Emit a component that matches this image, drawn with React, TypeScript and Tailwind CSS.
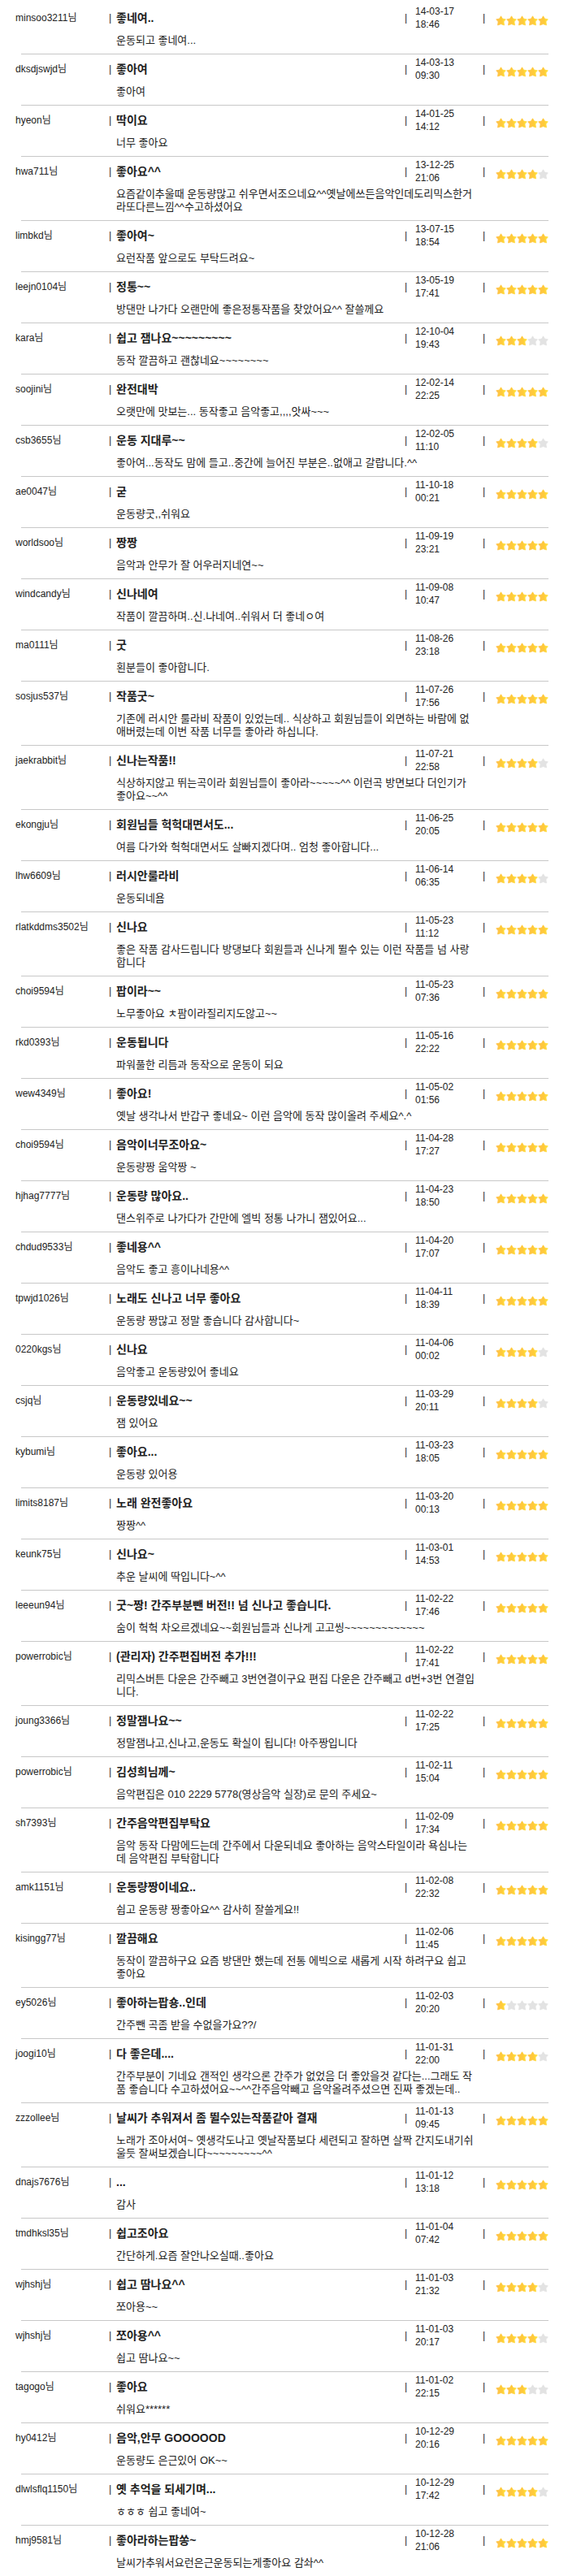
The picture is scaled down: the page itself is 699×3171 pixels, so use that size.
type Review = {
  user: string
  title: string
  date: string
  time: string
  rating: number
  body: string
}

const reviews: Review[] = [
  { user: "minsoo3211", title: "좋네여..", date: "14-03-17", time: "18:46", rating: 5, body: "운동되고 좋네여..." },
  { user: "dksdjswjd", title: "좋아여", date: "14-03-13", time: "09:30", rating: 5, body: "좋아여" },
  { user: "hyeon", title: "딱이요", date: "14-01-25", time: "14:12", rating: 5, body: "너무 좋아요" },
  { user: "hwa711", title: "좋아요^^", date: "13-12-25", time: "21:06", rating: 4, body: "요즘같이추울때 운동량많고 쉬우면서조으네요^^옛날에쓰든음악인데도리믹스한거\n라또다른느낌^^수고하셨어요" },
  { user: "limbkd", title: "좋아여~", date: "13-07-15", time: "18:54", rating: 5, body: "요런작품 앞으로도 부탁드려요~" },
  { user: "leejn0104", title: "정통~~", date: "13-05-19", time: "17:41", rating: 5, body: "방댄만 나가다 오랜만에 좋은정통작품을 찾았어요^^ 잘쓸께요" },
  { user: "kara", title: "쉽고 잼나요~~~~~~~~~", date: "12-10-04", time: "19:43", rating: 3, body: "동작 깔끔하고 괜찮네요~~~~~~~~" },
  { user: "soojini", title: "완전대박", date: "12-02-14", time: "22:25", rating: 5, body: "오랫만에 맛보는... 동작좋고 음악좋고,,,,앗싸~~~" },
  { user: "csb3655", title: "운동 지대루~~", date: "12-02-05", time: "11:10", rating: 4, body: "좋아여...동작도 맘에 들고..중간에 늘어진 부분은..없애고 갈랍니다.^^" },
  { user: "ae0047", title: "굳", date: "11-10-18", time: "00:21", rating: 5, body: "운동량굿,,쉬워요" },
  { user: "worldsoo", title: "짱짱", date: "11-09-19", time: "23:21", rating: 5, body: "음악과 안무가 잘 어우러지네연~~" },
  { user: "windcandy", title: "신나네여", date: "11-09-08", time: "10:47", rating: 5, body: "작품이 깔끔하며..신.나네여..쉬워서 더 좋네ㅇ여" },
  { user: "ma0111", title: "굿", date: "11-08-26", time: "23:18", rating: 5, body: "횐분들이 좋아합니다." },
  { user: "sosjus537", title: "작품굿~", date: "11-07-26", time: "17:56", rating: 5, body: "기존에 러시안 룰라비 작품이 있었는데.. 식상하고 회원님들이 외면하는 바람에 없\n애버렸는데 이번 작품 너무들 좋아라 하십니다." },
  { user: "jaekrabbit", title: "신나는작품!!", date: "11-07-21", time: "22:58", rating: 4, body: "식상하지않고 뛰는곡이라 회원님들이 좋아라~~~~~^^ 이런곡 방면보다 더인기가\n좋아요~~^^" },
  { user: "ekongju", title: "회원님들 헉헉대면서도...", date: "11-06-25", time: "20:05", rating: 5, body: "여름 다가와 헉헉대면서도 살빠지겠다며.. 엄청 좋아합니다..." },
  { user: "lhw6609", title: "러시안룰라비", date: "11-06-14", time: "06:35", rating: 4, body: "운동되네욤" },
  { user: "rlatkddms3502", title: "신나요", date: "11-05-23", time: "11:12", rating: 5, body: "좋은 작품 감사드립니다 방댕보다 회원들과 신나게 뛸수 있는 이런 작품들 넘 사랑\n합니다" },
  { user: "choi9594", title: "팝이라~~", date: "11-05-23", time: "07:36", rating: 5, body: "노무좋아요 ㅊ팜이라질리지도않고~~" },
  { user: "rkd0393", title: "운동됩니다", date: "11-05-16", time: "22:22", rating: 5, body: "파워풀한 리듬과 동작으로 운동이 되요" },
  { user: "wew4349", title: "좋아요!", date: "11-05-02", time: "01:56", rating: 5, body: "옛날 생각나서 반갑구 좋네요~ 이런 음악에 동작 많이올려 주세요^.^" },
  { user: "choi9594", title: "음악이너무조아요~", date: "11-04-28", time: "17:27", rating: 5, body: "운동량짱 움악짱 ~" },
  { user: "hjhag7777", title: "운동량 많아요..", date: "11-04-23", time: "18:50", rating: 5, body: "댄스위주로 나가다가 간만에 엘빅 정통 나가니 잼있어요..." },
  { user: "chdud9533", title: "좋네용^^", date: "11-04-20", time: "17:07", rating: 5, body: "음악도 좋고 흥이나네용^^" },
  { user: "tpwjd1026", title: "노래도 신나고 너무 좋아요", date: "11-04-11", time: "18:39", rating: 5, body: "운동량 짱많고 정말 좋습니다 감사합니다~" },
  { user: "0220kgs", title: "신나요", date: "11-04-06", time: "00:02", rating: 4, body: "음악좋고 운동량있어 좋네요" },
  { user: "csjq", title: "운동량있네요~~", date: "11-03-29", time: "20:11", rating: 4, body: "잼 있어요" },
  { user: "kybumi", title: "좋아요...", date: "11-03-23", time: "18:05", rating: 5, body: "운동량 있어용" },
  { user: "limits8187", title: "노래 완전좋아요", date: "11-03-20", time: "00:13", rating: 5, body: "짱짱^^" },
  { user: "keunk75", title: "신나요~", date: "11-03-01", time: "14:53", rating: 5, body: "추운 날씨에 딱입니다~^^" },
  { user: "leeeun94", title: "굿~짱! 간주부분뺀 버전!! 넘 신나고 좋습니다.", date: "11-02-22", time: "17:46", rating: 5, body: "숨이 헉헉 차오르겠네요~~회원님들과 신나게 고고씽~~~~~~~~~~~~~" },
  { user: "powerrobic", title: "(관리자) 간주편집버전 추가!!!", date: "11-02-22", time: "17:41", rating: 5, body: "리믹스버튼 다운은 간주빼고 3번연결이구요 편집 다운은 간주빼고 d번+3번 연결입\n니다." },
  { user: "joung3366", title: "정말잼나요~~", date: "11-02-22", time: "17:25", rating: 5, body: "정말잼나고,신나고,운동도 확실이 됩니다! 아주짱입니다" },
  { user: "powerrobic", title: "김성희님께~", date: "11-02-11", time: "15:04", rating: 5, body: "음악편집은 010 2229 5778(영상음악 실장)로 문의 주세요~" },
  { user: "sh7393", title: "간주음악편집부탁요", date: "11-02-09", time: "17:34", rating: 5, body: "음악 동작 다맘에드는데 간주에서 다운되네요 좋아하는 음악스타일이라 욕심나는\n데 음악편집 부탁합니다" },
  { user: "amk1151", title: "운동량짱이네요..", date: "11-02-08", time: "22:32", rating: 5, body: "쉽고 운동량 짱좋아요^^ 감사히 잘쓸게요!!" },
  { user: "kisingg77", title: "깔끔해요", date: "11-02-06", time: "11:45", rating: 5, body: "동작이 깔끔하구요 요즘 방댄만 했는데 전통 에빅으로 새롭게 시작 하려구요 쉽고\n좋아요" },
  { user: "ey5026", title: "좋아하는팝숑..인데", date: "11-02-03", time: "20:20", rating: 1, body: "간주뺀 곡좀 받을 수없을가요??/" },
  { user: "joogi10", title: "다 좋은데....", date: "11-01-31", time: "22:00", rating: 4, body: "간주부분이 기네요 갠적인 생각으론 간주가 없었음 더 좋았을것 같다는...그래도 작\n품 좋습니다 수고하셨어요~~^^간주음악빼고 음악올려주셨으면 진짜 좋겠는데.." },
  { user: "zzzollee", title: "날씨가 추워져서 좀 뛸수있는작품같아 결재", date: "11-01-13", time: "09:45", rating: 5, body: "노래가 조아서여~ 옛생각도나고 옛날작품보다 세련되고 잘하면 살짝 간지도내기쉬\n울듯 잘써보겠습니다~~~~~~~~~^^" },
  { user: "dnajs7676", title: "...", date: "11-01-12", time: "13:18", rating: 5, body: "감사" },
  { user: "tmdhksl35", title: "쉽고조아요", date: "11-01-04", time: "07:42", rating: 5, body: "간단하게.요즘 잘안나오실때..좋아요" },
  { user: "wjhshj", title: "쉽고 땀나요^^", date: "11-01-03", time: "21:32", rating: 4, body: "쪼아용~~" },
  { user: "wjhshj", title: "쪼아용^^", date: "11-01-03", time: "20:17", rating: 4, body: "쉽고 땀나요~~" },
  { user: "tagogo", title: "좋아요", date: "11-01-02", time: "22:15", rating: 3, body: "쉬워요******" },
  { user: "hy0412", title: "음악,안무 GOOOOOD", date: "10-12-29", time: "20:16", rating: 5, body: "운동량도 은근있어 OK~~" },
  { user: "dlwlsflq1150", title: "옛 추억을 되세기며...", date: "10-12-29", time: "17:42", rating: 4, body: "ㅎㅎㅎ 쉽고 좋네여~" },
  { user: "hmj9581", title: "좋아라하는팝쏭~", date: "10-12-28", time: "21:06", rating: 5, body: "날씨가추워서요런은근운동되는게좋아요 감솨^^" },
]

function Star({ filled }: { filled: boolean }) {
  return (
    <svg viewBox="0 0 13 13" className="h-[13px] w-[13px]" aria-hidden="true">
      <path
        d="M6.5 .8 8.4 4.1 12.3 4.8 9.9 7.8 10.5 12 6.5 10.6 2.5 12 3.1 7.8 .7 4.8 4.6 4.1Z"
        fill={filled ? "url(#gold)" : "#e3e3e3"}
        stroke={filled ? "url(#gold)" : "#e3e3e3"}
        strokeWidth="0.8"
        strokeLinejoin="round"
      />
    </svg>
  )
}

function Rating({ value }: { value: number }) {
  return (
    <div className="mt-1.5 flex w-[65px] shrink-0" role="img" aria-label={`${value} / 5`}>
      {[1, 2, 3, 4, 5].map((n) => (
        <Star key={n} filled={n <= value} />
      ))}
    </div>
  )
}

export default function App() {
  return (
    <main className="min-h-screen bg-white pt-1 pr-6 pl-[19px] font-['Liberation_Sans','Noto_Sans_CJK_KR',sans-serif] text-[12px] leading-4 text-[#222222]">
      {/* Shared star gradient */}
      <svg className="absolute h-0 w-0" aria-hidden="true">
        <defs>
          <linearGradient id="gold" x1="0" y1="0" x2="1" y2="0">
            <stop offset="0" stopColor="#ffc04a" />
            <stop offset="0.6" stopColor="#ffcb38" />
            <stop offset="1" stopColor="#ffe63c" />
          </linearGradient>
        </defs>
      </svg>

      <ul>
        {reviews.map((review, idx) => (
          <li key={idx} className="group pt-0.5">
            <div className="flex h-8 items-center">
              <span className="w-[115px] shrink-0">{review.user}님</span>
              <span className="w-[9px] shrink-0">|</span>
              <h3 className="min-w-0 flex-1 text-[14px] font-bold">{review.title}</h3>
              <span className="w-[13px] shrink-0">|</span>
              <time className="w-[83px] shrink-0">
                {review.date}
                <br />
                {review.time}
              </time>
              <span className="w-4 shrink-0">|</span>
              <Rating value={review.rating} />
            </div>
            <p className="mt-1 pr-[80px] pb-2 pl-[124px] text-[13px] break-all whitespace-pre-line">{review.body}</p>
            <div className="ml-[7px] border-b border-[#c8c8c8] group-last:hidden" />
          </li>
        ))}
      </ul>
    </main>
  )
}
